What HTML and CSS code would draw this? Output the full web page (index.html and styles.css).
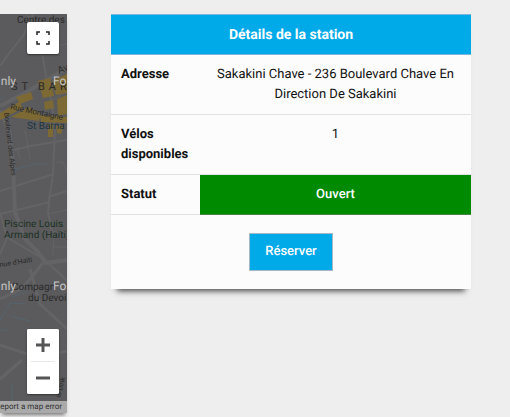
FILE: index.html
```html
<!DOCTYPE html>
<html lang="fr">
<head>
<meta charset="utf-8">
<meta name="viewport" content="width=device-width, initial-scale=1">
<title>Détails de la station</title>
<link rel="stylesheet" href="styles.css">
</head>
<body>
<main class="page">
  <section class="map" aria-label="Carte">
    <svg class="map-canvas" viewBox="0 0 67 399" preserveAspectRatio="xMaxYMin slice">
      <g class="road">
        <path d="M0 52 L10 38 L23 22 L33 0" stroke-width="2"/>
        <path d="M0 92 L25 79 L50 64 L67 54" stroke-width="4"/>
        <path d="M40 27 L46 62 L51 86 L55 115 L53 160 L50 180 L48 198 L52 218" stroke-width="2"/>
        <path d="M27 0 L42 34 L67 30 M52 86 L67 78" stroke-width="1"/>
        <path d="M0 97 L9 116 L13 148 L15 198 L24 224 L38 238 L46 249 L67 246" stroke-width="4"/>
        <path d="M0 177 L22 170 L54 160 M0 200 L50 188 M13 136 L36 131 L67 126 M48 183 L67 177" stroke-width="2"/>
        <path d="M25 116 L30 145 M18 136 L20 145 M56 148 L63 148 L67 157 M48 200 L67 196 M53 218 L67 217 M54 217 L53 242 M53 233 L67 233" stroke-width="1"/>
        <path d="M0 198 L7 224 L0 240 M5 222 L45 246 L67 267" stroke-width="2"/>
        <path d="M0 285 L22 275 L43 249 M0 331 L36 343 L67 337 M30 255 L40 290 L67 315 M0 365 L22 346" stroke-width="3"/>
      </g>
      <g class="district">
        <path d="M0 99 L19 88 L23 94 L0 106z M16 83 L31 78 L33 85 L20 90z M11 103 L29 93 L41 100 L39 107z M38 67 L50 64 L54 82 L43 84z M52 67 L67 60 L67 79 L56 81z M44 88 L53 86 L54 94 L45 96z M57 85 L67 81 L67 100 L58 102z M40 101 L67 103 L67 109 L41 108z M48 110 L53 110 L53 123 L48 123z M56 112 L64 111 L61 120 L57 119z"/>
      </g>
      <g class="water">
        <path d="M15 155 L35 150 L47 150 M0 86 L4 83 M12 283 L27 278 M0 306 L10 289 L25 290 M10 302 L30 307 M12 370 V388 H0 M0 316 H8"/>
      </g>
      <g class="place">
        <text x="17" y="9">Centre des</text>
        <text class="large" x="11" y="76">ST</text>
        <text class="large" x="38" y="76">BAR</text>
        <text x="59" y="60" transform="rotate(-22 59 60)">Av</text>
        <text class="medium" x="10" y="95" transform="rotate(12 10 95)">Rue Montaigne</text>
        <text class="small" x="4" y="99" transform="rotate(83 4 99)">Boulevard des Alpes</text>
        <text class="transit" x="27" y="115">St Barna</text>
        <text class="park" x="4" y="213">Piscine Louis</text>
        <text class="park" x="4" y="224">Armand (Haïti)</text>
        <text class="small" x="0" y="253" transform="rotate(-9 0 253)">nue d'Haïti</text>
        <text x="12" y="276">Compagn</text>
        <text x="28" y="287">du Devoi</text>
        <text class="small" x="60" y="384" transform="rotate(-75 60 384)">al Dink</text>
      </g>
      <g class="watermark">
        <text x="16" y="71" text-anchor="end">nly</text>
        <text x="53" y="71">Fo</text>
        <text x="16" y="276" text-anchor="end">nly</text>
        <text x="53" y="276">Fo</text>
      </g>
    </svg>
    <div class="map-controls">
      <button class="map-button" type="button" aria-label="Plein écran">
        <svg class="icon-full" viewBox="0 0 14 14"><path d="M1 4V1H4M10 1H13V4M13 10V13H10M4 13H1V10"/></svg>
      </button>
      <div class="zoom">
        <button class="map-button" type="button" aria-label="Zoom avant">
          <svg class="icon-zoom" viewBox="0 0 14 14"><path d="M7 0V14M0 7H14"/></svg>
        </button>
        <button class="map-button" type="button" aria-label="Zoom arrière">
          <svg class="icon-zoom" viewBox="0 0 14 14"><path d="M0 7H14"/></svg>
        </button>
      </div>
    </div>
    <div class="map-footer"><a class="report" href="#report">Report a map error</a></div>
  </section>
  <section class="card">
    <table class="details">
      <thead>
        <tr><th class="title" colspan="2">Détails de la station</th></tr>
      </thead>
      <tbody>
        <tr><th class="label" scope="row">Adresse</th><td class="value">Sakakini Chave - 236 Boulevard Chave En Direction De Sakakini</td></tr>
        <tr><th class="label" scope="row">Vélos disponibles</th><td class="value">1</td></tr>
        <tr><th class="label" scope="row">Statut</th><td class="value open">Ouvert</td></tr>
      </tbody>
    </table>
    <button class="book" type="button">Réserver</button>
  </section>
</main>
</body>
</html>
```
FILE: styles.css
```css
* {
  box-sizing: border-box;
}

body {
  margin: 0;
  background: #eee;
  color: #111;
  font: 13px/20px Roboto, "Liberation Sans", sans-serif;
  text-rendering: geometricPrecision;
}

button {
  font: inherit;
  text-rendering: inherit;
  cursor: pointer;
}

.page {
  display: flex;
  align-items: flex-start;
  gap: 44px;
  min-height: 100vh;
  padding: 14px 39px 4px 0;
}

.map {
  position: relative;
  align-self: stretch;
  display: flex;
  flex-direction: column;
  flex: 0 0 67px;
  overflow: hidden;
  background: #5b5b5d;
  box-shadow: 0 4px 4px -2px #777;
}

.map-canvas {
  position: absolute;
  inset: 0;
  width: 100%;
  height: 100%;
}

.road {
  fill: none;
  stroke: #646466;
}

.district {
  fill: #7c6934;
}

.water {
  fill: none;
  stroke: #56646f;
}

.place {
  fill: #292929;
  font-size: 10px;
}

.place .small {
  font-size: 7px;
}

.place .medium {
  font-size: 8px;
}

.place .large {
  font-size: 11px;
  letter-spacing: 4px;
}

.place .transit {
  fill: #1b3444;
}

.place .park {
  fill: #1c3023;
}

.watermark {
  fill: #c4c4c4;
  font-size: 12px;
}

.map-controls {
  position: relative;
  flex: 1;
  display: flex;
  flex-direction: column;
  justify-content: space-between;
  align-items: flex-end;
  padding: 8px 8px 7px 0;
}

.map-button {
  display: grid;
  place-items: center;
  width: 32px;
  height: 32px;
  padding: 0;
  border: 0;
  border-radius: 2px;
  background: #fff;
  box-shadow: 0 1px 2px #333;
}

.zoom {
  border-radius: 2px;
  background: #fff;
  box-shadow: 0 1px 2px #333;
}

.zoom .map-button {
  box-shadow: none;
}

.zoom .map-button + .map-button::before {
  content: "";
  width: 24px;
  height: 1px;
  background: #e6e6e6;
}

.zoom .map-button + .map-button {
  grid-template-rows: 1px 1fr;
  height: 33px;
}

.icon-full,
.icon-zoom {
  width: 14px;
  height: 14px;
  fill: none;
  stroke: #222;
  stroke-width: 2;
}

.icon-full {
  stroke-width: 1.5;
}

.icon-zoom {
  stroke: #555;
  stroke-width: 3;
}

.map-footer {
  position: relative;
  display: flex;
  justify-content: flex-end;
  padding-right: 5px;
  background: #aaa;
  font-size: 8px;
  line-height: 12px;
  white-space: nowrap;
}

.report {
  color: #333;
  text-decoration: none;
}

.card {
  flex: 1;
  padding-bottom: 18px;
  background: #fcfcfc;
  box-shadow: 0 8px 6px -6px #444;
}

.details {
  width: 100%;
  border-collapse: separate;
  border-spacing: 0;
}

.title,
.label,
.value {
  padding: 10px 10px 9px;
  border-bottom: 1px solid #e0e3e6;
  vertical-align: top;
}

.title {
  border-top: 1px solid #7cb5dd;
  border-bottom-color: #7cb5dd;
  background: #00a9e8;
  color: #fff;
  font-size: 14px;
  font-weight: 700;
}

.label {
  width: 89px;
  text-align: left;
  font-weight: 700;
}

.value {
  text-align: center;
}

.open {
  border-bottom-color: #4b824b;
  background: #008a00;
  color: #fff;
  font-weight: 500;
}

.book {
  display: block;
  margin: 18px auto 0;
  padding: 8px 15px;
  border: 1px solid #a5b9cb;
  background: #00a9e8;
  color: #fff;
  font-weight: 500;
}
```
